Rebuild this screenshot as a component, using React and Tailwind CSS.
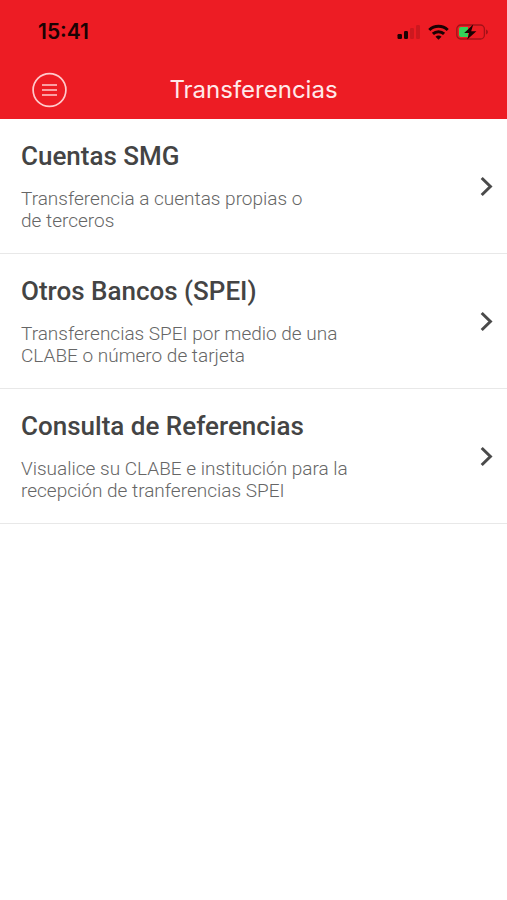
import React from "react";

const options = [
    {
        title: "Cuentas SMG",
        lines: ["Transferencia a cuentas propias o", "de terceros"],
    },
    {
        title: "Otros Bancos (SPEI)",
        lines: ["Transferencias SPEI por medio de una", "CLABE o número de tarjeta"],
    },
    {
        title: "Consulta de Referencias",
        lines: ["Visualice su CLABE e institución para la", "recepción de tranferencias SPEI"],
    },
];

function SignalIcon() {
    return (
        <svg width="24" height="16" viewBox="0 0 24 16" aria-hidden="true">
            <rect x="0.5" y="10" width="4.5" height="5" rx="1.2" fill="#1a0203" />
            <rect x="7" y="7" width="4" height="8" rx="1.2" fill="#1a0203" />
            <rect x="13" y="4" width="4" height="11" rx="1.2" fill="#cc181f" />
            <rect x="19" y="1" width="4" height="14" rx="1.2" fill="#cc181f" />
        </svg>
    );
}

function WifiIcon() {
    return (
        <svg width="21" height="16" viewBox="0 0 21 16" fill="none" stroke="#1a0203" strokeWidth="3" aria-hidden="true">
            <path d="M1.3 6C6.4 1.1 14.6 1.1 19.7 6" />
            <path d="M4.9 9.9c3.1-3 8.1-3 11.2 0" />
            <path d="M10.5 15.7 7.5 12.7c1.6-1.5 4.4-1.5 6 0z" fill="#1a0203" stroke="none" />
        </svg>
    );
}

function BatteryIcon() {
    return (
        <svg width="33" height="16" viewBox="0 0 33 16" aria-hidden="true">
            <rect x="0.8" y="1" width="27.6" height="14" rx="4" fill="none" stroke="#a41218" strokeWidth="1.3" />
            <path d="M30 5.5c2.6.7 2.6 4.3 0 5z" fill="#a41218" />
            <path d="M5 3h7v10H5a2 2 0 0 1-2-2V5a2 2 0 0 1 2-2z" fill="#34d158" />
            <path d="M17.2 0.6 8.2 9h5l-2 6.6L20.4 7.2h-5.2z" fill="#1a0203" />
        </svg>
    );
}

function MenuIcon() {
    return (
        <svg width="36" height="36" viewBox="0 0 36 36" fill="none" stroke="#ffc9cb" aria-hidden="true">
            <circle cx="17.5" cy="18" r="16.4" strokeWidth="1.7" />
            <path d="M10 13h15M10 18h15M10 23h15" strokeWidth="1.5" />
        </svg>
    );
}

function ChevronIcon() {
    return (
        <svg className="shrink-0" width="16" height="22" viewBox="0 0 16 22" fill="none" stroke="#4a4a4a" strokeWidth="3" aria-hidden="true">
            <path d="M2.7 3 11.4 11.5 2.7 20" />
        </svg>
    );
}

export default function App() {
    return (
        <div className="min-h-screen bg-white font-[Roboto,sans-serif]">
            <header className="bg-[#ed1c24]">
                {/* Status bar */}
                <div className="flex items-center justify-between pt-0.5 pl-[38px] pr-[18px] h-[61px]">
                    <span className="font-[Inter,sans-serif] text-[21px] leading-6 font-semibold text-[#1a0203]">15:41</span>
                    <div className="flex items-center gap-[7px]">
                        <SignalIcon />
                        <WifiIcon />
                        <BatteryIcon />
                    </div>
                </div>

                {/* Title bar */}
                <div className="grid grid-cols-[1fr_auto_1fr] items-center h-[58px] px-8">
                    <button type="button" aria-label="Menú" className="justify-self-start">
                        <MenuIcon />
                    </button>
                    <h1 className="font-[Inter,sans-serif] text-[24px] leading-8 text-[#ffe9ea]">Transferencias</h1>
                </div>
            </header>

            <nav>
                {options.map((option) => (
                    <a
                        key={option.title}
                        href="#"
                        className="flex items-center justify-between border-b border-[#e8e8e8] pt-5 pb-[21px] pl-[21px] pr-3"
                    >
                        <div>
                            <h2 className="text-[26px] leading-[34px] font-medium text-[#444444]">{option.title}</h2>
                            <p className="mt-[15px] text-[19px] leading-[22px] font-light text-[#666666]">
                                {option.lines[0]}
                                <br />
                                {option.lines[1]}
                            </p>
                        </div>
                        <ChevronIcon />
                    </a>
                ))}
            </nav>
        </div>
    );
}
